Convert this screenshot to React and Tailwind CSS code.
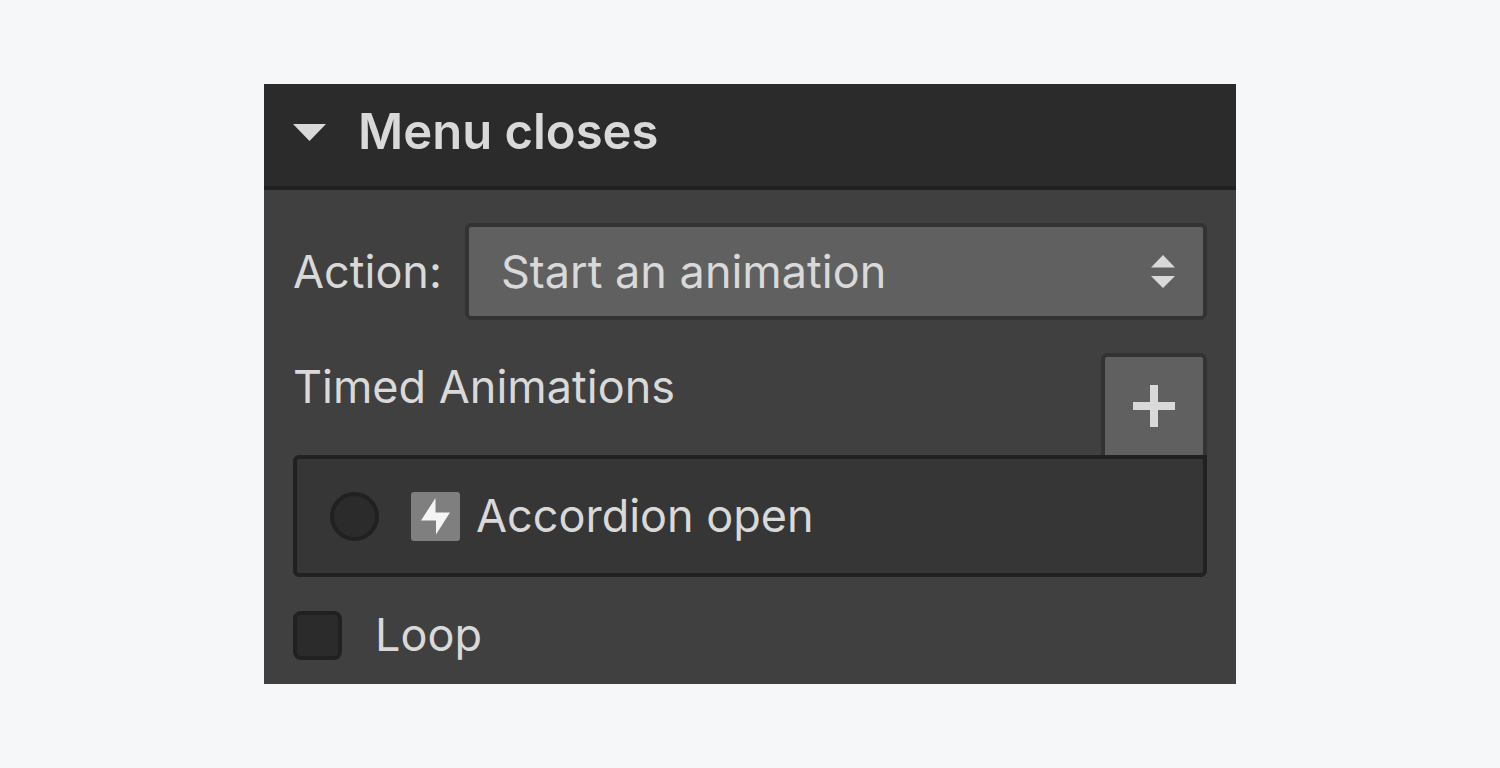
import { useState } from "react";

function BoltIcon() {
  return (
    <svg viewBox="0 0 49 49" className="size-[49px] shrink-0" aria-hidden="true">
      <rect width="49" height="49" rx="3" fill="#7f7f7f" />
      <path d="M24.500 6V20.500H39L25 42.500V28.500H10Z" fill="#f5f5f5" />
    </svg>
  );
}

export default function App() {
  const [open, setOpen] = useState(true);

  return (
    <main className="flex min-h-screen items-center justify-center bg-[#f6f7f9] font-['Inter',sans-serif] text-[#d9d9d9]">
      <section className="w-full max-w-[972px] bg-[#404040] text-[45px] font-normal leading-[50px]">
        <h2 className="border-b-4 border-[#212121] bg-[#2b2b2b]">
          <button
            type="button"
            aria-expanded={open}
            onClick={() => setOpen(!open)}
            className="flex w-full items-center gap-8 px-[29px] pb-1.5 text-left text-[49px] font-semibold leading-[96px]"
          >
            <svg viewBox="0 0 33 17" className="h-[17px] w-[33px] shrink-0" aria-hidden="true">
              <path d="M0 0H33L16.500 17Z" fill="#d9d9d9" />
            </svg>
            Menu closes
          </button>
        </h2>

        {open && (
          <div className="flex flex-col gap-[33px] px-[29px] pt-[33px] pb-6">
            <div className="flex items-center">
              <label htmlFor="action" className="w-[172px] shrink-0">
                Action:
              </label>
              <div className="relative min-w-0 flex-1">
                <select
                  id="action"
                  className="block h-[97px] w-full appearance-none rounded-md border-4 border-[#333333] bg-[#606060] pr-16 pl-8"
                >
                  <option>Start an animation</option>
                </select>
                <svg
                  viewBox="0 0 24 33"
                  className="pointer-events-none absolute inset-y-0 right-8 my-auto h-[33px] w-6"
                  aria-hidden="true"
                >
                  <path d="M0 12.500L12 0L24 12.500ZM0 21H24L12 33Z" fill="#d9d9d9" />
                </svg>
              </div>
            </div>

            <div>
              <div className="flex items-start justify-between">
                <h3 className="leading-[67px]">Timed Animations</h3>
                <button
                  type="button"
                  aria-label="Add timed animation"
                  className="flex h-[102px] w-[106px] shrink-0 items-center justify-center rounded-t-md border-4 border-b-0 border-[#333333] bg-[#606060]"
                >
                  <svg viewBox="0 0 42 42" className="size-[42px]" aria-hidden="true">
                    <path d="M17 0H25V17H42V25H25V42H17V25H0V17H17Z" fill="#d9d9d9" />
                  </svg>
                </button>
              </div>
              <div className="rounded-md rounded-tr-none border-4 border-[#212121] bg-[#363636] px-[33px] py-8">
                <label className="flex items-center">
                  <input
                    type="radio"
                    name="animation"
                    className="mr-8 size-[49px] shrink-0 appearance-none rounded-full border-4 border-[#212121] bg-[#2b2b2b] checked:bg-[#d9d9d9]"
                  />
                  <BoltIcon />
                  <span className="ml-4">Accordion open</span>
                </label>
              </div>
            </div>

            <label className="flex items-center gap-[33px]">
              <input
                type="checkbox"
                className="size-[49px] shrink-0 appearance-none rounded-lg border-4 border-[#212121] bg-[#2b2b2b] checked:bg-[#d9d9d9]"
              />
              Loop
            </label>
          </div>
        )}
      </section>
    </main>
  );
}
